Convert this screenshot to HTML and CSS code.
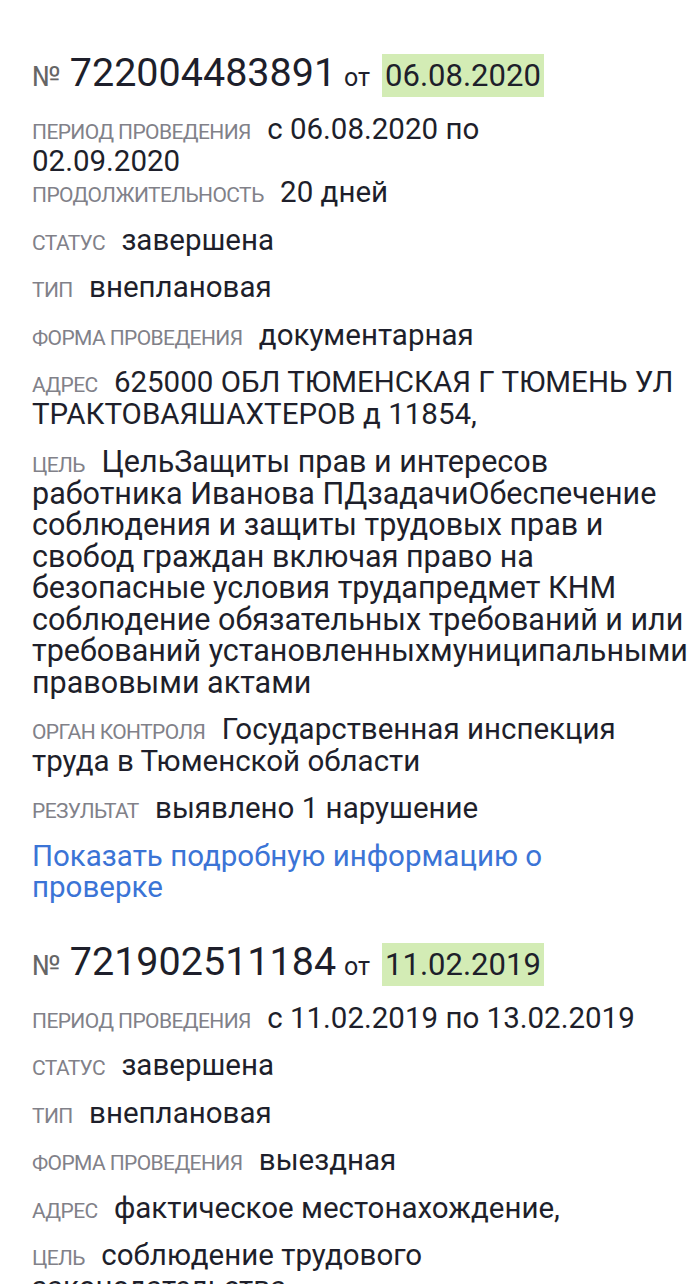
FILE: index.html
```html
<!DOCTYPE html>
<html lang="ru">
<head>
    <meta charset="UTF-8">
    <meta name="viewport" content="width=device-width, initial-scale=1.0">
    <title>Проверки</title>
    <link rel="stylesheet" href="styles.css">
</head>
<body>
    <div class="list">
        <div class="check">
            <h2 class="check-title">
                <span class="no">№</span> <span class="num">722004483891</span> <span class="from">от</span> <span class="date">06.08.2020</span>
            </h2>
            <p class="row"><span class="label">Период проведения</span> <span class="value">с 06.08.2020 по<br>02.09.2020</span></p>
            <p class="row tight"><span class="label">Продолжительность</span> <span class="value">20 дней</span></p>
            <p class="row"><span class="label">Статус</span> <span class="value">завершена</span></p>
            <p class="row"><span class="label">Тип</span> <span class="value">внеплановая</span></p>
            <p class="row"><span class="label">Форма проведения</span> <span class="value">документарная</span></p>
            <p class="row"><span class="label">Адрес</span> <span class="value">625000 ОБЛ ТЮМЕНСКАЯ Г ТЮМЕНЬ УЛ ТРАКТОВАЯШАХТЕРОВ д 11854,</span></p>
            <p class="row goal"><span class="label">Цель</span> <span class="value">ЦельЗащиты прав и интересов работника Иванова ПДзадачиОбеспечение соблюдения и защиты трудовых прав и свобод граждан включая право на безопасные условия трудапредмет КНМ соблюдение обязательных требований и или требований установленныхмуниципальными правовыми актами</span></p>
            <p class="row"><span class="label">Орган контроля</span> <span class="value">Государственная инспекция труда в Тюменской области</span></p>
            <p class="row"><span class="label">Результат</span> <span class="value">выявлено 1 нарушение</span></p>
            <p class="row"><a class="more" href="#">Показать подробную информацию о проверке</a></p>
        </div>

        <div class="check">
            <h2 class="check-title">
                <span class="no">№</span> <span class="num">721902511184</span> <span class="from">от</span> <span class="date">11.02.2019</span>
            </h2>
            <p class="row"><span class="label">Период проведения</span> <span class="value">с 11.02.2019 по 13.02.2019</span></p>
            <p class="row"><span class="label">Статус</span> <span class="value">завершена</span></p>
            <p class="row"><span class="label">Тип</span> <span class="value">внеплановая</span></p>
            <p class="row"><span class="label">Форма проведения</span> <span class="value">выездная</span></p>
            <p class="row"><span class="label">Адрес</span> <span class="value">фактическое местонахождение,</span></p>
            <p class="row"><span class="label">Цель</span> <span class="value">соблюдение трудового законодательства</span></p>
        </div>
    </div>
</body>
</html>
```

FILE: styles.css
```css
body {
    margin: 0;
    padding: 53px 20px 0 32px;
    background: #fff;
    color: #1e1f2b;
    font-family: Roboto, "Noto Sans", sans-serif;
}
.check {
    margin-bottom: 38px;
}
.check-title {
    margin: 0 0 16px;
    font-weight: 400;
    line-height: 40px;
    white-space: nowrap;
}
.check-title .no {
    font-size: 28px;
    color: #666;
}
.check-title .num {
    font-size: 39.5px;
    margin-left: 3px;
}
.check-title .from {
    font-size: 25px;
    margin-left: 2px;
}
.check-title .date {
    font-size: 31px;
    background: #d3ecb5;
    padding: 3px 3px;
    margin-left: 6px;
}
.row {
    margin: 0 0 16px;
    font-size: 29.5px;
    line-height: 31.5px;
}
.row.goal {
    font-size: 30.5px;
    margin-right: -18px;
}
.row.tight {
    margin-top: -16px;
}
.label {
    font-size: 21px;
    line-height: 20px;
    text-transform: uppercase;
    color: #818189;
    letter-spacing: -0.6px;
    margin-right: 9px;
}
.more {
    color: #3b74d6;
    text-decoration: none;
}
```
